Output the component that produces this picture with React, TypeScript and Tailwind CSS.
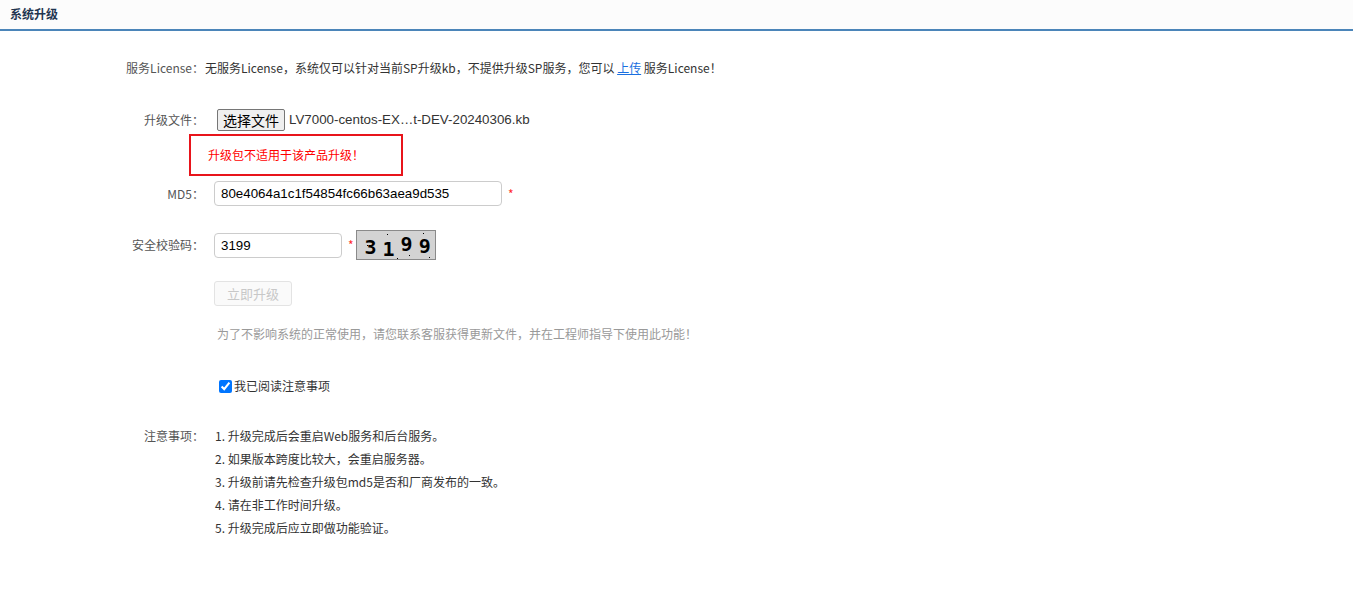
import React from 'react'

const font = { fontFamily: '"Noto Sans CJK SC", "Noto Sans", sans-serif' }

const notes = [
  '1. 升级完成后会重启Web服务和后台服务。',
  '2. 如果版本跨度比较大，会重启服务器。',
  '3. 升级前请先检查升级包md5是否和厂商发布的一致。',
  '4. 请在非工作时间升级。',
  '5. 升级完成后应立即做功能验证。',
]

function Label({ children }: { children: React.ReactNode }) {
  return <div className="w-[204px] shrink-0 text-right text-[12px] text-[#555]">{children}</div>
}

function Captcha() {
  const digits = [
    { ch: '3', y: 'mt-[4px]' },
    { ch: '1', y: 'mt-[7px]' },
    { ch: '9', y: 'mt-[-2px]' },
    { ch: '9', y: 'mt-[1px]' },
  ]
  return (
    <div className="relative ml-[2px] flex h-[30px] w-[80px] items-center justify-center gap-[6px] border border-[#8a8a8a] bg-[#d3d3d3] pl-[4px]">
      {digits.map((d, i) => (
        <span
          key={i}
          className={`text-[20px] font-bold leading-none text-black ${d.y}`}
          style={{ fontFamily: '"DejaVu Sans Mono", monospace' }}
        >
          {d.ch}
        </span>
      ))}
      <span className="absolute left-[10px] top-[14px] h-[1px] w-[1px] bg-black" />
      <span className="absolute left-[30px] top-[3px] h-[1px] w-[1px] bg-black" />
      <span className="absolute left-[52px] top-[24px] h-[1px] w-[1px] bg-black" />
      <span className="absolute left-[72px] top-[26px] h-[1px] w-[1px] bg-black" />
      <span className="absolute left-[66px] top-[2px] h-[1px] w-[1px] bg-black" />
      <span className="absolute left-[40px] top-[27px] h-[1px] w-[1px] bg-black" />
    </div>
  )
}

export default function App() {
  return (
    <div className="min-h-[603px] w-full bg-white text-[#333]" style={font}>
      <div className="flex h-[31px] items-center border-b-2 border-[#4b85b9] bg-[#fcfcfc] pb-[2px] pl-[10px]">
        <span className="text-[12px] font-bold text-[#1f3550]">系统升级</span>
      </div>

      <div className="flex h-[20px] items-center mt-[27px] text-[12px]">
        <Label>服务License：</Label>
        <span className="ml-[1px] text-[#333]">
          无服务License，系统仅可以针对当前SP升级kb，不提供升级SP服务，您可以{' '}
          <a className="text-[#1a6fe0] underline">上传</a> 服务License！
        </span>
      </div>

      <div className="mt-[31px] flex h-[22px] items-center">
        <Label>升级文件：</Label>
        <button className="ml-[13px] h-[22px] rounded-[2px] border border-[#767676] bg-[#efefef] px-[5px] text-[14px] leading-none text-black">
          选择文件
        </button>
        <span
          className="ml-[4px] text-[13.33px] text-[#333]"
          style={{ fontFamily: '"Liberation Sans", Arial, sans-serif' }}
        >
          LV7000-centos-EX…t-DEV-20240306.kb
        </span>
      </div>

      <div className="ml-[189px] mt-[3px] flex h-[42px] w-[214px] items-center border-2 border-[#e8141b] pl-[17px] text-[12px] text-[#ff0000]">
        升级包不适用于该产品升级！
      </div>

      <div className="mt-[5px] flex h-[25px] items-center">
        <Label>MD5：</Label>
        <input
          readOnly
          value="80e4064a1c1f54854fc66b63aea9d535"
          className="ml-[10px] h-[25px] w-[288px] rounded-[4px] border border-[#ccc] px-[6px] text-[13.33px] text-black outline-none"
          style={{ fontFamily: '"Liberation Sans", Arial, sans-serif' }}
        />
        <span className="ml-[6px] text-[12px] text-[#ff2a2a]">*</span>
      </div>

      <div className="mt-[24px] flex h-[30px] items-center">
        <Label>安全校验码：</Label>
        <input
          readOnly
          value="3199"
          className="ml-[10px] h-[25px] w-[128px] rounded-[4px] border border-[#ccc] px-[6px] text-[13.33px] text-black outline-none"
          style={{ fontFamily: '"Liberation Sans", Arial, sans-serif' }}
        />
        <span className="ml-[6px] text-[12px] text-[#ff2a2a]">*</span>
        <Captcha />
      </div>

      <div className="mt-[21px] flex pl-[214px]">
        <button className="h-[25px] w-[78px] rounded-[3px] border border-[#e3e3e3] bg-[#fafafa] text-[13px] text-[#c8c8c8]">
          立即升级
        </button>
      </div>

      <div className="mt-[18px] flex h-[20px] items-center pl-[217px] text-[12px] text-[#999]">
        为了不影响系统的正常使用，请您联系客服获得更新文件，并在工程师指导下使用此功能！
      </div>

      <div className="mt-[32px] flex h-[20px] items-center pl-[219px] text-[12px] text-[#333]">
        <input type="checkbox" defaultChecked className="m-0 h-[13px] w-[13px] accent-[#0075ff]" />
        <span className="ml-[2px]">我已阅读注意事项</span>
      </div>

      <div className="mt-[28px] flex">
        <div className="flex h-[23px] items-center">
          <Label>注意事项：</Label>
        </div>
        <div className="ml-[11px] flex flex-col text-[12px] text-[#333]">
          {notes.map((n) => (
            <div key={n} className="flex h-[23px] items-center">
              {n}
            </div>
          ))}
        </div>
      </div>
    </div>
  )
}
